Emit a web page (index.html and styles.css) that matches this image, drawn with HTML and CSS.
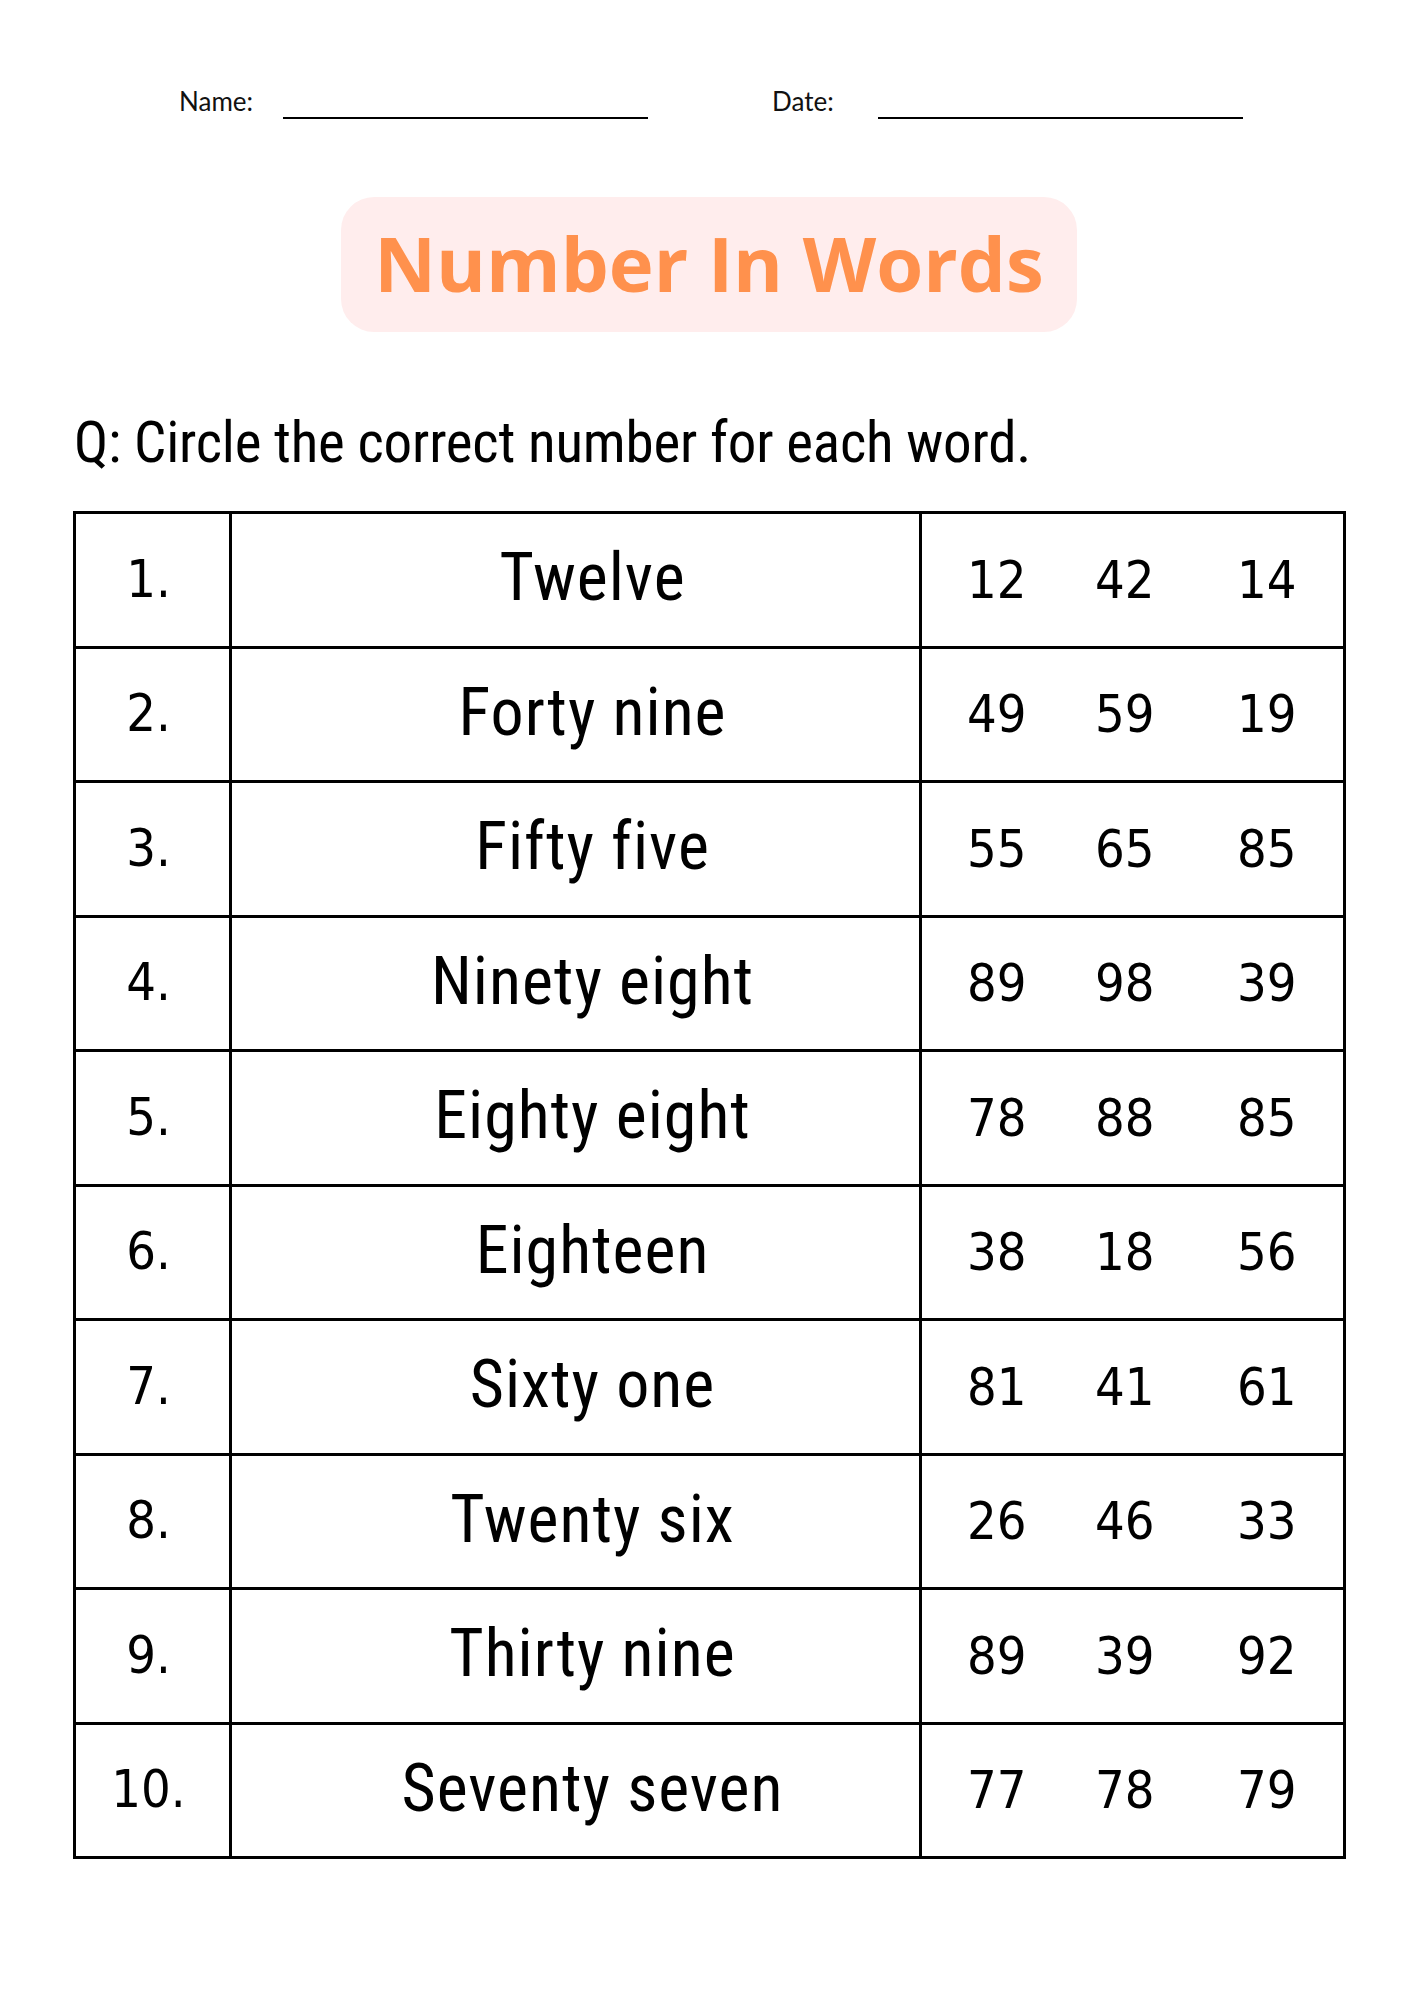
FILE: index.html
```html
<!DOCTYPE html>
<html lang="en">
<head>
<meta charset="utf-8">
<title>Number In Words</title>
<link rel="stylesheet" href="styles.css">
</head>
<body>
<div class="page">
  <div class="header">
    <div class="field field-name">
      <span class="field-label">Name:</span>
      <span class="field-line"></span>
    </div>
    <div class="field field-date">
      <span class="field-label">Date:</span>
      <span class="field-line"></span>
    </div>
  </div>

  <div class="title-wrap">
    <h1 class="title">Number In Words</h1>
  </div>

  <p class="question">Q: Circle the correct number for each word.</p>

  <table class="sheet">
    <colgroup>
      <col class="c-num">
      <col class="c-word">
      <col class="c-choices">
    </colgroup>
    <tbody>
      <tr><td class="num">1.</td><td class="word">Twelve</td><td class="choices"><div class="opts"><span>12</span><span>42</span><span>14</span></div></td></tr>
      <tr><td class="num">2.</td><td class="word">Forty nine</td><td class="choices"><div class="opts"><span>49</span><span>59</span><span>19</span></div></td></tr>
      <tr><td class="num">3.</td><td class="word">Fifty five</td><td class="choices"><div class="opts"><span>55</span><span>65</span><span>85</span></div></td></tr>
      <tr><td class="num">4.</td><td class="word">Ninety eight</td><td class="choices"><div class="opts"><span>89</span><span>98</span><span>39</span></div></td></tr>
      <tr><td class="num">5.</td><td class="word">Eighty eight</td><td class="choices"><div class="opts"><span>78</span><span>88</span><span>85</span></div></td></tr>
      <tr><td class="num">6.</td><td class="word">Eighteen</td><td class="choices"><div class="opts"><span>38</span><span>18</span><span>56</span></div></td></tr>
      <tr><td class="num">7.</td><td class="word">Sixty one</td><td class="choices"><div class="opts"><span>81</span><span>41</span><span>61</span></div></td></tr>
      <tr><td class="num">8.</td><td class="word">Twenty six</td><td class="choices"><div class="opts"><span>26</span><span>46</span><span>33</span></div></td></tr>
      <tr><td class="num">9.</td><td class="word">Thirty nine</td><td class="choices"><div class="opts"><span>89</span><span>39</span><span>92</span></div></td></tr>
      <tr><td class="num">10.</td><td class="word">Seventy seven</td><td class="choices"><div class="opts"><span>77</span><span>78</span><span>79</span></div></td></tr>
    </tbody>
  </table>
</div>
</body>
</html>
```
FILE: styles.css
```css
html, body {
  margin: 0;
  padding: 0;
  background: #ffffff;
}

body {
  width: 1414px;
  font-family: "Liberation Sans", Arial, sans-serif;
  color: #000;
}

.page {
  width: 1414px;
  min-height: 2000px;
}

/* Header: Name / Date */
.header {
  display: flex;
  padding: 88px 0 0 179px;
}

.field {
  display: flex;
  align-items: flex-end;
}

.field-name {
  margin-right: 124px;
}

.field-label {
  font-family: Lato, "Noto Sans", sans-serif;
  font-size: 26px;
  line-height: 26px;
  margin-bottom: 5px;
  color: #111;
}

.field-name .field-label {
  width: 104px;
}

.field-date .field-label {
  width: 106px;
}

.field-line {
  display: block;
  width: 365px;
  height: 0;
  border-bottom: 2px solid #000;
}

/* Title */
.title-wrap {
  display: flex;
  justify-content: center;
  margin-top: 78px;
}

.title {
  margin: 0;
  width: 736px;
  height: 135px;
  box-sizing: border-box;
  padding-bottom: 4px;
  background: #ffeded;
  border-radius: 33px;
  text-align: center;
  font-family: "Open Sans", "Noto Sans", sans-serif;
  font-weight: 700;
  font-size: 76px;
  line-height: 131px;
  color: #ff914d;
  transform: translateX(2px);
}

/* Question */
.question {
  margin: 75px 0 0 74px;
  font-family: "Roboto Condensed", "DejaVu Sans Condensed", sans-serif;
  font-size: 57px;
  letter-spacing: -0.2px;
  line-height: 72px;
  color: #000;
}

/* Table */
.sheet {
  margin: 32px 0 0 73px;
  width: 1270px;
  border-collapse: collapse;
  border: 3px solid #000;
  table-layout: fixed;
}

.c-num { width: 156px; }
.c-word { width: 690px; }
.c-choices { width: 424px; }

.sheet td {
  border: 3px solid #000;
  height: 127.5px;
  padding: 0;
  vertical-align: middle;
}

.num {
  text-align: center;
  padding-right: 8px !important;
  padding-bottom: 2px !important;
  font-family: "DejaVu Sans Condensed", "DejaVu Sans", sans-serif;
  font-size: 52px;
}

.word {
  text-align: center;
  padding-left: 34px !important;
  padding-bottom: 4px !important;
  font-family: "Roboto Condensed", "DejaVu Sans Condensed", sans-serif;
  font-size: 66px;
  letter-spacing: 1px;
}

.opts {
  display: grid;
  grid-template-columns: 128px 142px auto;
  padding-left: 45px;
  font-family: "DejaVu Sans Condensed", "DejaVu Sans", sans-serif;
  font-size: 52px;
}
```
